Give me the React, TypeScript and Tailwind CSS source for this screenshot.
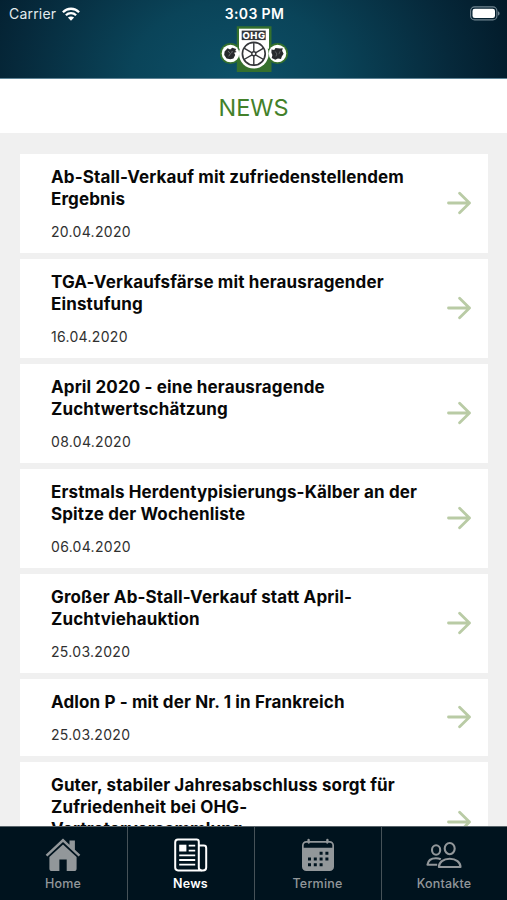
import type { ReactNode } from 'react';

type NewsItem = { lines: string[]; date: string };

const news: NewsItem[] = [
  { lines: ['Ab-Stall-Verkauf mit zufriedenstellendem', 'Ergebnis'], date: '20.04.2020' },
  { lines: ['TGA-Verkaufsfärse mit herausragender', 'Einstufung'], date: '16.04.2020' },
  { lines: ['April 2020 - eine herausragende', 'Zuchtwertschätzung'], date: '08.04.2020' },
  { lines: ['Erstmals Herdentypisierungs-Kälber an der', 'Spitze der Wochenliste'], date: '06.04.2020' },
  { lines: ['Großer Ab-Stall-Verkauf statt April-', 'Zuchtviehauktion'], date: '25.03.2020' },
  { lines: ['Adlon P - mit der Nr. 1 in Frankreich'], date: '25.03.2020' },
  { lines: ['Guter, stabiler Jahresabschluss sorgt für', 'Zufriedenheit bei OHG-', 'Vertreterversammlung'], date: '20.03.2020' },
];

export default function App() {
  return (
    <div className="flex h-[900px] w-[507px] flex-col overflow-hidden bg-[#f0f0f0] font-['Inter','Liberation_Sans',sans-serif]">
      <header className="h-[79px] shrink-0 border-b border-[#5f8496] bg-[radial-gradient(ellipse_290px_220px_at_46%_100%,#0d5068_0%,#0a4459_35%,#06293b_75%,#021a29_100%)]">
        <StatusBar />
        <div className="flex justify-center">
          <Logo />
        </div>
      </header>

      <h1 className="flex h-[54px] shrink-0 items-center justify-center bg-white pt-[3px] text-[23.5px] text-[#43812a]">NEWS</h1>

      <main className="flex min-h-0 flex-1 flex-col gap-1.5 overflow-hidden px-5 pt-[21px]">
        {news.map((item) => (
          <NewsCard key={item.lines[0]} {...item} />
        ))}
      </main>

      <nav className="grid h-[74px] shrink-0 grid-cols-[128px_127px_127px_125px] border-t border-[#59646a] bg-[#00131e]">
        <Tab label="Home" icon={<HomeIcon />} />
        <Tab label="News" icon={<NewsIcon />} active />
        <Tab label="Termine" icon={<CalendarIcon />} />
        <Tab label="Kontakte" icon={<PeopleIcon />} />
      </nav>
    </div>
  );
}

function StatusBar() {
  return (
    <div className="grid h-[26px] grid-cols-3 items-center pl-[9px] pr-[7px] pt-px text-[14px] text-white">
      <div className="flex items-center gap-1.5 text-[#e3ebee]">
        <span className="tracking-[0.2px]">Carrier</span>
        <svg width="18" height="14" viewBox="0 0 18 14" fill="none" stroke="#fff" strokeWidth="2.3">
          <path d="M.9 5.2C5.4.6 12.6.6 17.1 5.2" />
          <path d="M3.9 8.3c2.8-2.8 7.4-2.8 10.2 0" />
          <path d="M9 13.7 5.9 10.6c1.7-1.6 4.5-1.6 6.2 0z" fill="#fff" stroke="none" />
        </svg>
      </div>
      <span className="text-center font-semibold tracking-[0.35px]">3:03 PM</span>
      <svg className="justify-self-end" width="30" height="15" viewBox="0 0 30 15">
        <rect x=".6" y=".9" width="26.3" height="13" rx="4" fill="none" stroke="#718591" strokeWidth="1.1" />
        <rect x="2.5" y="2.8" width="22.5" height="9.2" rx="2.3" fill="#fff" />
        <path d="M28 5.2c2.1.8 2.1 3.6 0 4.4z" fill="#718591" />
      </svg>
    </div>
  );
}

function Logo() {
  return (
    <svg width="68" height="46" viewBox="0 0 68 46">
      <circle cx="10.5" cy="27.5" r="10.6" fill="#35702d" />
      <circle cx="57.5" cy="27.5" r="10.6" fill="#35702d" />
      <path d="M16.8.3h34.7V46H16.8z" fill="#35702d" />
      <path d="M19 2.7h30v20H19z" fill="#fff" />
      <circle cx="33.8" cy="27.8" r="14.8" fill="#fff" />
      <circle cx="10.5" cy="27.5" r="8.8" fill="#fff" />
      <circle cx="57.5" cy="27.5" r="8.8" fill="#fff" />
      <path d="M21.7 4.6h24v9.5h-24z" fill="#34363a" />
      <text x="34" y="12.7" textAnchor="middle" fontSize="9.5" fontWeight="800" letterSpacing=".5" fill="#fff" fontFamily="Inter, sans-serif">OHG</text>
      <g fill="none" stroke="#34363a" strokeWidth="1.4">
        <circle cx="33.8" cy="27.8" r="11.4" strokeWidth="1.7" />
        <circle cx="33.8" cy="27.8" r="2" />
        <path d="M33.8 16.5v9.3M33.8 29.8v9.3M24 22.1l8.1 4.7M35.5 28.8l8.1 4.7M43.6 22.1l-8.1 4.7M32.1 28.8 24 33.5" />
      </g>
      <path d="m4.6 25.5 3-3.2 2.5 1.2 2.2-1.8 3.8 1.2-.8 2 1.4 1.2-2.6.7 1.1 2.1-1.8 3.6-3.1.7-3.7-.6-2.4-3.6z" fill="#27292d" />
      <path d="m8 25 2.4 2.7-1.7 2.6M12.3 25l-.7 2.2" fill="none" stroke="#8a8e90" strokeWidth=".7" />
      <path d="m51.5 23.4 2.7.5 1.3-1.9 4.7.6 2.6-.4-.7 2.5 1.5 3.1-1.8 2.7-.8 2.4-3.1-.4-2.6 1.2-3.6-1.7.7-3.1-1-2.2z" fill="#27292d" />
      <path d="m55.2 25.4 1.7 2.6-1 2.4m4.5-5.6-1.5 3.3" fill="none" stroke="#707477" strokeWidth=".7" />
    </svg>
  );
}

function NewsCard({ lines, date }: NewsItem) {
  return (
    <article className="flex w-[468px] shrink-0 items-center justify-between bg-white pb-[11px] pl-[31px] pr-[17px] pt-3">
      <div className="whitespace-nowrap">
        <h2 className="text-[17px] font-bold leading-[22px] tracking-[0.13px] text-[#080808]">
          {lines.map((line) => (
            <span key={line} className="block">{line}</span>
          ))}
        </h2>
        <p className="mt-3 text-[14px] leading-5 tracking-[0.3px] text-[#303030]">{date}</p>
      </div>
      <svg className="mb-0.5 shrink-0" width="24" height="24" viewBox="0 0 24 24" fill="none" stroke="#b9cba5" strokeWidth="2.8" strokeLinecap="round" strokeLinejoin="round">
        <path d="M1.5 12h21M12.6 2.3l9.9 9.7-9.9 9.7" />
      </svg>
    </article>
  );
}

function Tab({ label, icon, active }: { label: string; icon: ReactNode; active?: boolean }) {
  return (
    <div className={`flex flex-col items-center border-r border-[#465258] pr-px pt-[11px] last:border-r-0 ${active ? 'text-white' : 'text-[#92979a]'}`}>
      {icon}
      <span className={`mt-[3px] text-[12.5px] leading-[18px] tracking-[0.2px] ${active ? 'font-semibold' : 'font-medium'}`}>{label}</span>
    </div>
  );
}

function HomeIcon() {
  return (
    <svg width="36" height="34" viewBox="0 0 36 34" fill="currentColor">
      <path d="M18 .6 24.5 6.7V2.6h5.4v9.1l5.4 5-1.7 1.8L18 3.9 2.4 18.5.7 16.7z" />
      <path d="M18 6.5 31.6 19v11.4a2.6 2.6 0 0 1-2.6 2.6h-7.3V21.6h-7.3V33H7a2.6 2.6 0 0 1-2.6-2.6V19z" />
    </svg>
  );
}

function NewsIcon() {
  return (
    <svg width="36" height="34" viewBox="0 0 36 34" fill="none" stroke="currentColor" strokeWidth="2">
      <path d="M5 1.6h18.6a2.2 2.2 0 0 1 2.2 2.2v25.8a2.8 2.8 0 0 0 2.8 2.8H5a2.8 2.8 0 0 1-2.8-2.8V4.4A2.8 2.8 0 0 1 5 1.6z" />
      <path d="M26 7.5h4.8a2.4 2.4 0 0 1 2.4 2.4v19.6c0 1.8-1.3 2.9-3.3 2.9h-2" />
      <path d="M6.2 6.7h7.2v6.8H6.2z" fill="currentColor" stroke="none" />
      <path d="M15.7 7.6h6.5M15.7 12.6h6.5M6.2 17.4h16M6.2 22h16M6.2 26.7h16" strokeWidth="1.8" />
    </svg>
  );
}

function CalendarIcon() {
  return (
    <svg width="34" height="34" viewBox="0 0 34 34">
      <path d="M5.3 3h1.1V1.9a1.2 1.2 0 0 1 2.4 0V3h16.4V1.9a1.2 1.2 0 0 1 2.4 0V3h1.1a4.3 4.3 0 0 1 4.3 4.3v21.4a4.3 4.3 0 0 1-4.3 4.3H5.3A4.3 4.3 0 0 1 1 28.7V7.3A4.3 4.3 0 0 1 5.3 3z" fill="currentColor" />
      <path d="M2.7 9.7V7.3a2.6 2.6 0 0 1 2.6-2.6h1.3c.4 1.3 1.9 1.3 2.3 0h16.2c.4 1.3 1.9 1.3 2.3 0h1.3a2.6 2.6 0 0 1 2.6 2.6v2.4z" fill="#00131e" />
      <path d="M18.6 13.8h3v3h-3zm5.8 0h3v3h-3zM7 19.5h3v3H7zm5.8 0h3v3h-3zm5.8 0h3v3h-3zm5.8 0h3v3h-3zM7 25.2h3v3H7zm5.8 0h3v3h-3zm5.8 0h3v3h-3z" fill="#00131e" />
    </svg>
  );
}

function PeopleIcon() {
  return (
    <svg width="36" height="34" viewBox="0 0 36 34" fill="none" stroke="currentColor" strokeWidth="2.1" strokeLinejoin="round">
      <ellipse cx="23.7" cy="10.6" rx="5" ry="5.6" />
      <ellipse cx="10.1" cy="12" rx="4.1" ry="4.7" />
      <path d="M12.9 29c0-4.7 4.4-8.3 10.8-8.3S34.5 24.3 34.5 29z" />
      <path d="M11.2 26.7H1.5c.5-4.1 3.9-6.5 8.4-6.5 1.9 0 3.5.4 4.9 1.1" />
    </svg>
  );
}
